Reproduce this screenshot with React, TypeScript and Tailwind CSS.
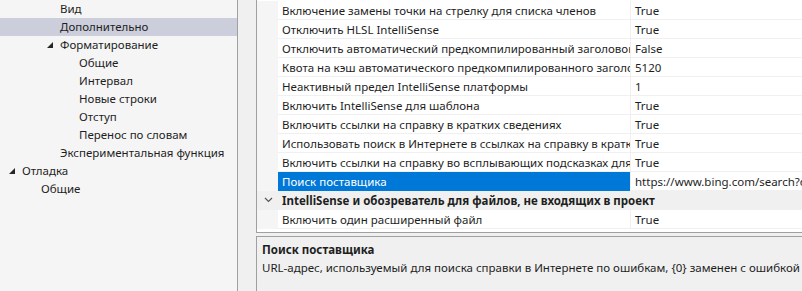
import React from 'react';

type TreeItem = { label: string; level: number; expanded?: boolean; selected?: boolean };

const tree: TreeItem[] = [
  { label: 'Вид', level: 2 },
  { label: 'Дополнительно', level: 2, selected: true },
  { label: 'Форматирование', level: 2, expanded: true },
  { label: 'Общие', level: 3 },
  { label: 'Интервал', level: 3 },
  { label: 'Новые строки', level: 3 },
  { label: 'Отступ', level: 3 },
  { label: 'Перенос по словам', level: 3 },
  { label: 'Экспериментальная функция', level: 2 },
  { label: 'Отладка', level: 0, expanded: true },
  { label: 'Общие', level: 1 },
];

type Row =
  | { kind: 'prop'; name: string; value: string; selected?: boolean }
  | { kind: 'cat'; name: string };

const rows: Row[] = [
  { kind: 'prop', name: 'Включение замены точки на стрелку для списка членов', value: 'True' },
  { kind: 'prop', name: 'Отключить HLSL IntelliSense', value: 'True' },
  { kind: 'prop', name: 'Отключить автоматический предкомпилированный заголовок', value: 'False' },
  { kind: 'prop', name: 'Квота на кэш автоматического предкомпилированного заголовка', value: '5120' },
  { kind: 'prop', name: 'Неактивный предел IntelliSense платформы', value: '1' },
  { kind: 'prop', name: 'Включить IntelliSense для шаблона', value: 'True' },
  { kind: 'prop', name: 'Включить ссылки на справку в кратких сведениях', value: 'True' },
  { kind: 'prop', name: 'Использовать поиск в Интернете в ссылках на справку в кратких сведениях', value: 'True' },
  { kind: 'prop', name: 'Включить ссылки на справку во всплывающих подсказках для ошибок', value: 'True' },
  { kind: 'prop', name: 'Поиск поставщика', value: 'https://www.bing.com/search?q={0}', selected: true },
  { kind: 'cat', name: 'IntelliSense и обозреватель для файлов, не входящих в проект' },
  { kind: 'prop', name: 'Включить один расширенный файл', value: 'True' },
];

function ExpandedGlyph() {
  return (
    <svg width="6" height="6" viewBox="0 0 6 6" className="shrink-0">
      <polygon points="6,0 6,6 0,6" fill="#262626" />
    </svg>
  );
}

function Chevron() {
  return (
    <svg width="9" height="6" viewBox="0 0 9 6">
      <path d="M1 1 L4.5 4.5 L8 1" stroke="#555" strokeWidth="1.2" fill="none" />
    </svg>
  );
}

export default function App() {
  return (
    <div
      className="w-[802px] h-[291px] flex overflow-hidden bg-[#f0f0f0] text-[11.5px] text-[#1e1e1e]"
      style={{ fontFamily: '"Noto Sans", "Open Sans", sans-serif' }}
    >
      {/* Options tree */}
      <div className="w-[238px] shrink-0 bg-[#f5f5f5] border-r border-[#a0a0a0]">
        {tree.map((item, i) => (
          <div
            key={i}
            className={`h-[18px] flex items-center leading-[18px] ${item.selected ? 'bg-[#cccedb]' : ''}`}
          >
            <div
              className="flex items-center justify-end pr-[7px] shrink-0"
              style={{ width: 22 + item.level * 19 }}
            >
              {item.expanded && <ExpandedGlyph />}
            </div>
            <span className="whitespace-nowrap">{item.label}</span>
          </div>
        ))}
      </div>

      <div className="w-[18px] shrink-0" />

      {/* Right side: property grid + description */}
      <div className="flex-1 flex flex-col min-w-0">
        <div className="h-[233px] shrink-0 bg-white border-l border-b border-[#a0a0a0] pt-[1px] overflow-hidden">
          {rows.map((row, i) =>
            row.kind === 'cat' ? (
              <div key={i} className="h-[19px] flex bg-[#f0f0f0] border-b border-[#f0f0f0]">
                <div className="w-[21px] shrink-0 flex items-center justify-center pl-[2px]">
                  <Chevron />
                </div>
                <div className="pl-[4px] pt-[1px] font-bold whitespace-nowrap leading-[18px]">{row.name}</div>
              </div>
            ) : (
              <div key={i} className="h-[19px] flex">
                <div className="w-[21px] shrink-0 bg-[#f5f5f5] border-b border-[#f5f5f5]" />
                <div
                  className={`w-[352px] shrink-0 overflow-hidden whitespace-nowrap pl-[4px] pt-[1px] leading-[17px] border-b ${
                    row.selected ? 'bg-[#0078d7] text-white border-[#0078d7]' : 'border-[#f0f0f0]'
                  }`}
                >
                  {row.name}
                </div>
                <div className="flex-1 min-w-0 overflow-hidden whitespace-nowrap pl-[4px] pt-[1px] leading-[17px] border-l border-b border-[#f0f0f0]">
                  {row.value}
                </div>
              </div>
            )
          )}
        </div>

        <div className="h-[3px] shrink-0" />

        <div className="flex-1 bg-[#f0f0f0] border-l border-t border-[#a0a0a0] pl-[5px] pt-[4px]">
          <div className="font-bold leading-[18px] whitespace-nowrap">Поиск поставщика</div>
          <div className="leading-[17px] whitespace-nowrap">
            URL-адрес, используемый для поиска справки в Интернете по ошибкам, {'{0}'} заменен с ошибкой
          </div>
        </div>
      </div>
    </div>
  );
}
